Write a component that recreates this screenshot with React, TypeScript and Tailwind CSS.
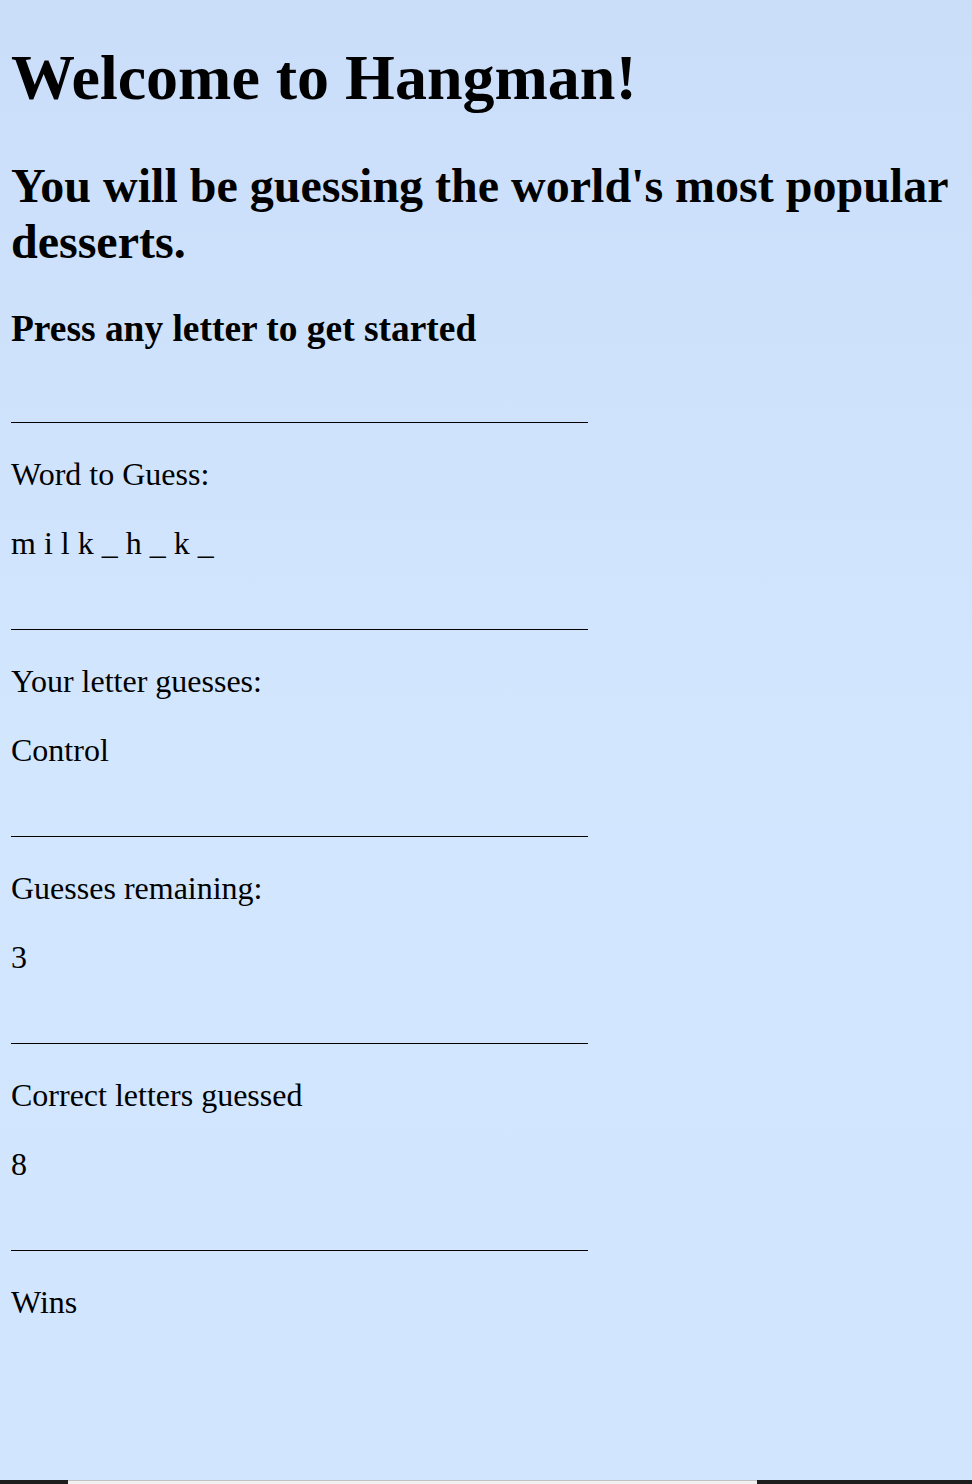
const sections = [
  { label: "Word to Guess:", value: "m i l k _ h _ k _" },
  { label: "Your letter guesses:", value: "Control" },
  { label: "Guesses remaining:", value: "3" },
  { label: "Correct letters guessed", value: "8" },
];

function Section({ label, value }: { label: string; value: string }) {
  return (
    <div className="flex flex-col">
      <hr className="w-[577px] h-px border-0 bg-black" />
      <p className="mt-[33px] text-[32px] leading-[37px]">{label}</p>
      <p className="mt-[32px] mb-[67px] text-[32px] leading-[37px] whitespace-pre">{value}</p>
    </div>
  );
}

export default function App() {
  return (
    <div className="min-h-[1484px] flex flex-col bg-linear-to-b from-[#cadefa] via-[#d2e6fe] to-[#d1e5fe] text-black font-['Liberation_Serif',serif]">
      <main className="flex-1 flex flex-col pl-[11px]">
        <h1 className="mt-[41px] text-[64px] leading-[74px] font-bold">Welcome to Hangman!</h1>
        <h2 className="mt-[43px] text-[48px] leading-[56px] font-bold pr-[16px]">
          You will be guessing the world's most popular desserts.
        </h2>
        <h3 className="mt-[37px] text-[37.44px] leading-[43px] font-bold">Press any letter to get started</h3>
        <div className="mt-[72px] flex flex-col">
          {sections.map((s) => (
            <Section key={s.label} label={s.label} value={s.value} />
          ))}
          <hr className="w-[577px] h-px border-0 bg-black" />
          <p className="mt-[33px] text-[32px] leading-[37px]">Wins</p>
        </div>
      </main>
      <div className="h-[4px] flex">
        <div className="w-[68px] bg-[#1d1d1d]" />
        <div className="w-[689px] bg-[#f0f0f0] border-t border-[#c2c2c2]" />
        <div className="flex-1 bg-[#1d1d1d]" />
      </div>
    </div>
  );
}
